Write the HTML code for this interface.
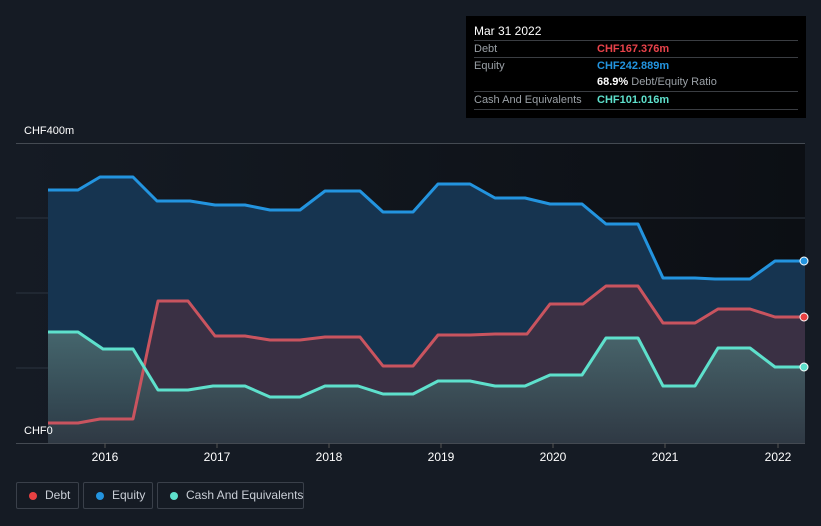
<!DOCTYPE html>
<html><head><meta charset="utf-8"><style>
body{margin:0;width:821px;height:526px;background:#151b24;font-family:"Liberation Sans",sans-serif;overflow:hidden;position:relative}
.tip{position:absolute;left:466px;top:16px;width:340px;height:102px;background:#000}
.tip .t{position:absolute;left:8px;top:8px;color:#fff;font-size:12px}
.row{position:absolute;left:8px;width:324px;border-top:1px solid #3a3d42;height:16px;font-size:11px;color:#9aa0a6;line-height:17px;white-space:nowrap}
.row span{position:absolute;left:123px;font-weight:bold}
.lbl{position:absolute;color:#fff;font-size:11px}
.leg{position:absolute;top:482px;height:27px;border:1px solid #3a404a;border-radius:2px;color:#c9ced6;font-size:12px;line-height:25px;box-sizing:border-box;white-space:nowrap}
.leg i{position:absolute;top:9px;width:8px;height:8px;border-radius:50%}
</style></head><body>
<svg width="821" height="526" style="position:absolute;left:0;top:0">
<defs>
<linearGradient id="bg" x1="0" x2="1" y1="0" y2="0"><stop offset="0" stop-color="#151b24"/><stop offset="1" stop-color="#0c0f14"/></linearGradient>
<linearGradient id="cg" x1="0" x2="0" y1="0" y2="1"><stop offset="0" stop-color="#4a6b70"/><stop offset="1" stop-color="#2e3a44"/></linearGradient>
</defs>
<rect x="16" y="143" width="789" height="300" fill="url(#bg)"/>
<g stroke="#2c3440" stroke-width="1"><line x1="16" y1="218" x2="805" y2="218"/><line x1="16" y1="293" x2="805" y2="293"/><line x1="16" y1="368" x2="805" y2="368"/></g>
<line x1="16" y1="143.5" x2="805" y2="143.5" stroke="#444a52"/>
<polygon fill="#163450" points="48,443 48,190 78,190 100,177 133,177 157,201 190,201 215,205 245,205 270,210 300,210 325,191 360,191 383,212 413,212 438,184 470,184 495,198 525,198 550,204 582,204 606,224 638,224 663,278 695,278 715,279 750,279 775,261 805,261 805,443"/>
<polygon fill="#3a3044" points="48,443 48,423 78,423 100,419 133,419 158,301 188,301 215,336 245,336 270,340 300,340 325,337 360,337 383,366 413,366 438,335 470,335 495,334 527,334 550,304 583,304 606,286 638,286 663,323 695,323 718,309 750,309 775,317 805,317 805,443"/>
<polygon fill="url(#cg)" fill-opacity="0.9" points="48,443 48,332 78,332 103,349 133,349 158,390 188,390 213,386 245,386 270,397 300,397 325,386 358,386 383,394 413,394 438,381 470,381 495,386 525,386 550,375 582,375 606,338 638,338 663,386 695,386 718,348 750,348 775,367 805,367 805,443"/>
<g fill="none" stroke-width="3" stroke-linejoin="round">
<polyline stroke="#2394df" points="48,190 78,190 100,177 133,177 157,201 190,201 215,205 245,205 270,210 300,210 325,191 360,191 383,212 413,212 438,184 470,184 495,198 525,198 550,204 582,204 606,224 638,224 663,278 695,278 715,279 750,279 775,261 805,261"/>
<polyline stroke="#c9545f" points="48,423 78,423 100,419 133,419 158,301 188,301 215,336 245,336 270,340 300,340 325,337 360,337 383,366 413,366 438,335 470,335 495,334 527,334 550,304 583,304 606,286 638,286 663,323 695,323 718,309 750,309 775,317 805,317"/>
<polyline stroke="#5ee0cc" points="48,332 78,332 103,349 133,349 158,390 188,390 213,386 245,386 270,397 300,397 325,386 358,386 383,394 413,394 438,381 470,381 495,386 525,386 550,375 582,375 606,338 638,338 663,386 695,386 718,348 750,348 775,367 805,367"/>
</g>
<circle cx="804" cy="261" r="4" fill="#2394df" stroke="#fff"/>
<circle cx="804" cy="317" r="4" fill="#e84142" stroke="#fff"/>
<circle cx="804" cy="367" r="4" fill="#5ee0cc" stroke="#fff"/>
<line x1="16" y1="443.5" x2="805" y2="443.5" stroke="#444a52"/>
<g stroke="#555" ><line x1="105" y1="443" x2="105" y2="448"/><line x1="217" y1="443" x2="217" y2="448"/><line x1="329" y1="443" x2="329" y2="448"/><line x1="441" y1="443" x2="441" y2="448"/><line x1="553" y1="443" x2="553" y2="448"/><line x1="665" y1="443" x2="665" y2="448"/><line x1="778" y1="443" x2="778" y2="448"/></g>
<g fill="#fff" font-size="12" text-anchor="middle" font-family="Liberation Sans,sans-serif">
<text x="105" y="461">2016</text><text x="217" y="461">2017</text><text x="329" y="461">2018</text><text x="441" y="461">2019</text><text x="553" y="461">2020</text><text x="665" y="461">2021</text><text x="778" y="461">2022</text></g>
</svg>
<div class="lbl" style="left:24px;top:125px">CHF400m</div>
<div class="lbl" style="left:24px;top:425px">CHF0</div>
<div class="tip">
<div class="t">Mar 31 2022</div>
<div class="row" style="top:24px">Debt<span style="color:#e8424a">CHF167.376m</span></div>
<div class="row" style="top:41px">Equity<span style="color:#2394df">CHF242.889m</span></div>
<div class="row" style="top:58px;border-top:none"><span style="color:#fff">68.9% <b style="color:#9aa0a6;font-weight:normal">Debt/Equity Ratio</b></span></div>
<div class="row" style="top:75px">Cash And Equivalents<span style="color:#5ee0cc">CHF101.016m</span></div>
<div class="row" style="top:93px"></div>
</div>
<div class="leg" style="left:16px;width:63px"><i style="left:12px;background:#e84142"></i><span style="position:absolute;left:28px">Debt</span></div>
<div class="leg" style="left:83px;width:70px"><i style="left:12px;background:#2394df"></i><span style="position:absolute;left:28px">Equity</span></div>
<div class="leg" style="left:157px;width:147px"><i style="left:12px;background:#5ee0cc"></i><span style="position:absolute;left:28px">Cash And Equivalents</span></div>
</body></html>
